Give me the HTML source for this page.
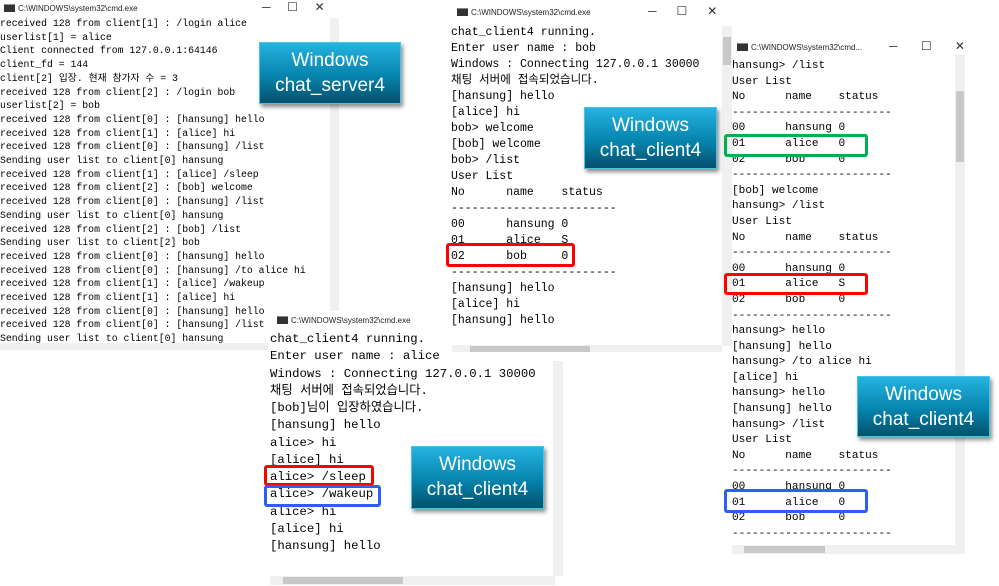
<!DOCTYPE html>
<html><head><meta charset="utf-8"><style>
body{margin:0;width:999px;height:586px;overflow:hidden;background:#fff;position:relative;font-family:"Liberation Mono","Noto Sans CJK KR",monospace}
.win{position:absolute;background:#fff}
.title{position:absolute;font:8px "Liberation Sans",sans-serif;color:#222;white-space:nowrap}
.title i{display:inline-block;width:11px;height:7px;background:#333;margin-right:3px;vertical-align:-1px;border-top:1px solid #888}
.btns{position:absolute;font:12px "Liberation Sans",sans-serif;color:#333}
pre{position:absolute;margin:0;font-family:"Liberation Mono","Noto Sans CJK KR",monospace;color:#000}
.vs{position:absolute;background:#f0f0f0}
.th{position:absolute;background:#c8c8c8}
.box{position:absolute;border:3px solid;border-radius:3px;box-sizing:border-box}
.lab{position:absolute;background:linear-gradient(#25b3e0,#0684ad 55%,#04506c);color:#fff;font:19px "Liberation Sans",sans-serif;text-align:center;line-height:25px;box-shadow:2px 3px 4px rgba(0,0,0,.45);border:1px solid #4cc3e6;box-sizing:border-box;padding-top:5px}
</style></head><body>

<!-- server -->
<div class="win" style="left:0;top:0;width:340px;height:350px">
<div class="title" style="left:4px;top:4px"><i></i>C:\WINDOWS\system32\cmd.exe</div>
<div class="btns" style="left:262px;top:0">─&nbsp;&nbsp;&nbsp;&nbsp;&nbsp;☐&nbsp;&nbsp;&nbsp;&nbsp;&nbsp;✕</div>
<div class="vs" style="left:330px;top:18px;width:9px;height:325px"></div>
<div class="vs" style="left:0;top:343px;width:330px;height:7px"></div>
<pre style="left:0;top:17px;font-size:9.8px;line-height:13.7px">received 128 from client[1] : /login alice
userlist[1] = alice
Client connected from 127.0.0.1:64146
client_fd = 144
client[2] 입장. 현재 참가자 수 = 3
received 128 from client[2] : /login bob
userlist[2] = bob
received 128 from client[0] : [hansung] hello
received 128 from client[1] : [alice] hi
received 128 from client[0] : [hansung] /list
Sending user list to client[0] hansung
received 128 from client[1] : [alice] /sleep
received 128 from client[2] : [bob] welcome
received 128 from client[0] : [hansung] /list
Sending user list to client[0] hansung
received 128 from client[2] : [bob] /list
Sending user list to client[2] bob
received 128 from client[0] : [hansung] hello
received 128 from client[0] : [hansung] /to alice hi
received 128 from client[1] : [alice] /wakeup
received 128 from client[1] : [alice] hi
received 128 from client[0] : [hansung] hello
received 128 from client[0] : [hansung] /list
Sending user list to client[0] hansung</pre>
</div>

<!-- alice -->
<div class="win" style="left:268px;top:311px;width:296px;height:275px">
<div class="title" style="left:9px;top:5px"><i></i>C:\WINDOWS\system32\cmd.exe</div>
<div class="vs" style="left:285px;top:50px;width:10px;height:215px"></div>
<div class="vs" style="left:2px;top:265px;width:285px;height:9px"></div>
<div class="th" style="left:15px;top:266px;width:120px;height:7px"></div>
<pre style="left:2px;top:20px;font-size:12.3px;line-height:17.25px">chat_client4 running.
Enter user name : alice
Windows : Connecting 127.0.0.1 30000
채팅 서버에 접속되었습니다.
[bob]님이 입장하였습니다.
[hansung] hello
alice> hi
[alice] hi
alice> /sleep
alice> /wakeup
alice> hi
[alice] hi
[hansung] hello</pre>
</div>
<div class="box" style="left:264px;top:465px;width:110px;height:21px;border-color:#f00"></div>
<div class="box" style="left:264px;top:485px;width:117px;height:22px;border-color:#2b5ff5"></div>

<!-- bob -->
<div class="win" style="left:448px;top:0;width:285px;height:352px">
<div class="title" style="left:9px;top:8px"><i></i>C:\WINDOWS\system32\cmd.exe</div>
<div class="btns" style="left:200px;top:4px">─&nbsp;&nbsp;&nbsp;&nbsp;&nbsp;&nbsp;☐&nbsp;&nbsp;&nbsp;&nbsp;&nbsp;&nbsp;✕</div>
<div class="vs" style="left:274px;top:26px;width:10px;height:320px"></div>
<div class="th" style="left:275px;top:37px;width:8px;height:28px"></div>
<div class="vs" style="left:4px;top:345px;width:270px;height:7px"></div>
<div class="th" style="left:22px;top:346px;width:120px;height:6px"></div>
<pre style="left:3px;top:25px;font-size:11.5px;line-height:16px">chat_client4 running.
Enter user name : bob
Windows : Connecting 127.0.0.1 30000
채팅 서버에 접속되었습니다.
[hansung] hello
[alice] hi
bob> welcome
[bob] welcome
bob> /list
User List
No      name    status
------------------------
00      hansung 0
01      alice   S
02      bob     0
------------------------
[hansung] hello
[alice] hi
[hansung] hello</pre>
</div>
<div class="box" style="left:446px;top:243px;width:129px;height:24px;border-color:#f00"></div>

<!-- right hansung -->
<div class="win" style="left:732px;top:40px;width:235px;height:516px">
<div class="title" style="left:5px;top:3px"><i></i>C:\WINDOWS\system32\cmd...</div>
<div class="btns" style="left:157px;top:-1px">─&nbsp;&nbsp;&nbsp;&nbsp;&nbsp;&nbsp;&nbsp;☐&nbsp;&nbsp;&nbsp;&nbsp;&nbsp;&nbsp;&nbsp;✕</div>
<div class="vs" style="left:223px;top:15px;width:10px;height:490px"></div>
<div class="th" style="left:224px;top:51px;width:8px;height:71px"></div>
<div class="vs" style="left:0;top:505px;width:233px;height:9px"></div>
<div class="th" style="left:12px;top:506px;width:81px;height:7px"></div>
<pre style="left:0;top:19px;font-size:11.1px;line-height:15.6px">hansung> /list
User List
No      name    status
------------------------
00      hansung 0
01      alice   0
02      bob     0
------------------------
[bob] welcome
hansung> /list
User List
No      name    status
------------------------
00      hansung 0
01      alice   S
02      bob     0
------------------------
hansung> hello
[hansung] hello
hansung> /to alice hi
[alice] hi
hansung> hello
[hansung] hello
hansung> /list
User List
No      name    status
------------------------
00      hansung 0
01      alice   0
02      bob     0
------------------------</pre>
</div>
<div class="box" style="left:724px;top:134px;width:144px;height:23px;border-color:#00b050"></div>
<div class="box" style="left:724px;top:273px;width:144px;height:22px;border-color:#f00"></div>
<div class="box" style="left:724px;top:489px;width:144px;height:24px;border-color:#2b5ff5"></div>

<!-- labels -->
<div class="lab" style="left:259px;top:42px;width:142px;height:62px">Windows<br>chat_server4</div>
<div class="lab" style="left:584px;top:107px;width:133px;height:62px">Windows<br>chat_client4</div>
<div class="lab" style="left:857px;top:376px;width:133px;height:61px">Windows<br>chat_client4</div>
<div class="lab" style="left:411px;top:446px;width:133px;height:63px">Windows<br>chat_client4</div>
</body></html>
